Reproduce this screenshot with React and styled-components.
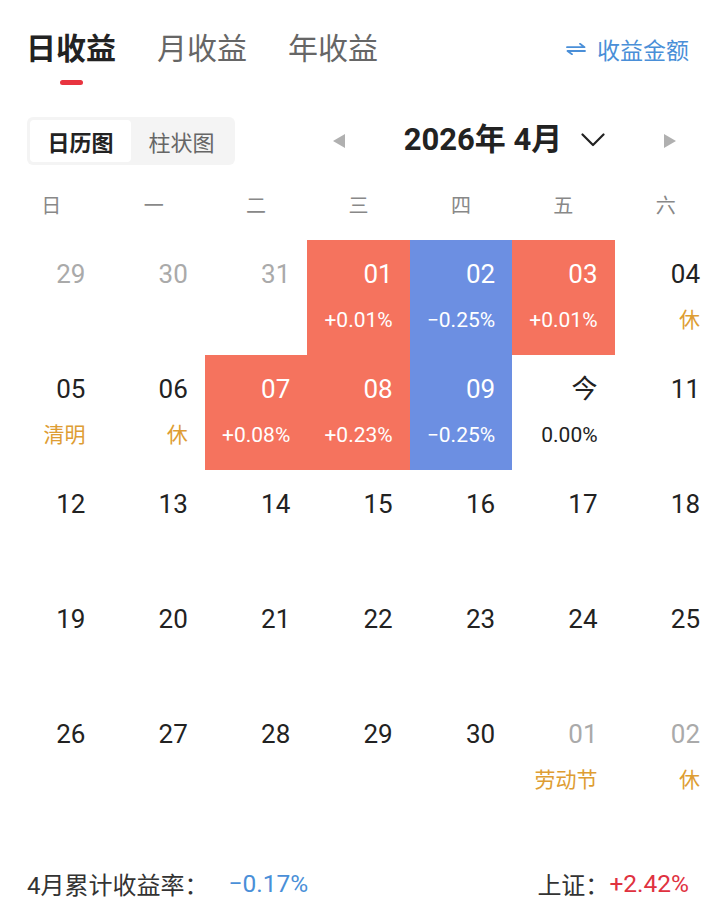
import React from "react";
import styled, { createGlobalStyle } from "styled-components";

const GlobalStyle = createGlobalStyle`
  body {
    margin: 0;
    background: #ffffff;
    font-family: Roboto, "Noto Sans CJK SC", sans-serif;
  }
`;

const Page = styled.div`
  width: 717px;
  background: #ffffff;
`;

const Header = styled.div`
  display: flex;
  align-items: flex-start;
  justify-content: space-between;
  padding: 30px 28px 0 26px;
`;

const Tabs = styled.div`
  display: flex;
  gap: 41px;
`;

const Tab = styled.div`
  display: flex;
  flex-direction: column;
  align-items: center;
  font-size: 30px;
  line-height: 38px;
  font-weight: ${(p) => (p.$active ? 700 : 400)};
  color: ${(p) => (p.$active ? "#222222" : "#666666")};
`;

const Underline = styled.div`
  width: 23px;
  height: 5px;
  border-radius: 3px;
  margin-top: 12px;
  background: ${(p) => (p.$active ? "#E8343F" : "transparent")};
`;

const AmountSwitch = styled.div`
  display: flex;
  align-items: center;
  gap: 11px;
  height: 38px;
  font-size: 23px;
  color: #4a8fd8;
`;

const Toolbar = styled.div`
  display: flex;
  align-items: center;
  margin-top: 32px;
  padding: 0 41px 0 27px;
`;

const Segmented = styled.div`
  display: flex;
  box-sizing: border-box;
  width: 208px;
  height: 48px;
  padding: 3px;
  background: #f4f4f4;
  border-radius: 6px;
`;

const SegButton = styled.div`
  flex: 1;
  display: flex;
  align-items: center;
  justify-content: center;
  border-radius: 4px;
  font-size: 22px;
  background: ${(p) => (p.$active ? "#ffffff" : "transparent")};
  font-weight: ${(p) => (p.$active ? 700 : 400)};
  color: ${(p) => (p.$active ? "#222222" : "#666666")};
`;

const MonthNav = styled.div`
  flex: 1;
  display: flex;
  align-items: center;
  justify-content: space-between;
  margin-left: 98px;
`;

const MonthTitle = styled.div`
  display: flex;
  align-items: center;
  gap: 19px;
  margin-top: -2px;
  font-size: 31px;
  line-height: 40px;
  font-weight: 700;
  color: #222222;
`;

const Weekdays = styled.div`
  display: grid;
  grid-template-columns: repeat(7, 1fr);
  align-items: center;
  height: 34px;
  margin-top: 22px;
  text-align: center;
  font-size: 20px;
  color: #888888;
`;

const Grid = styled.div`
  display: grid;
  grid-template-columns: repeat(7, 1fr);
  grid-auto-rows: 115px;
  margin-top: 19px;
`;

const toneBg = { up: "#F5735E", down: "#6C8FE2" };

const Cell = styled.div`
  display: flex;
  flex-direction: column;
  align-items: flex-end;
  padding: 19px 17px 0 0;
  background: ${(p) => toneBg[p.$tone] || "transparent"};
`;

const DayNum = styled.div`
  font-size: 26px;
  line-height: 30px;
  color: ${(p) => (p.$tone ? "#ffffff" : p.$other ? "#AAAAAA" : "#222222")};
`;

const Sub = styled.div`
  margin-top: 19px;
  font-size: 21px;
  line-height: 24px;
  color: ${(p) => (p.$tone ? "#ffffff" : p.$holiday ? "#DE9D33" : "#222222")};
`;

const Summary = styled.div`
  display: flex;
  align-items: center;
  justify-content: space-between;
  height: 40px;
  margin-top: 48px;
  padding: 0 28px 0 27px;
`;

const SumItem = styled.div`
  display: flex;
  align-items: center;
`;

const SumLabel = styled.span`
  font-size: 24px;
  color: #333333;
`;

const SumValue = styled.span`
  margin-left: ${(p) => p.$gap}px;
  font-size: 24.5px;
  color: ${(p) => (p.$up ? "#E0323F" : "#4A8FD8")};
`;

const SwapIcon = () => (
  <svg width="20" height="12" viewBox="0 0 20 12" fill="none" stroke="#4a8fd8" strokeWidth="1.8" strokeLinecap="round" strokeLinejoin="round">
    <path d="M1 4.2h17.5L14 0.8" />
    <path d="M19 8H1.5L6 11.2" />
  </svg>
);

const Triangle = ({ dir }) => (
  <svg width="12" height="14" viewBox="0 0 12 14">
    <path d={dir === "left" ? "M12 0v14L0 7z" : "M0 0v14l12-7z"} fill="#b0b0b0" />
  </svg>
);

const Chevron = () => (
  <svg width="24" height="14" viewBox="0 0 24 14" fill="none" stroke="#222" strokeWidth="2.2" strokeLinecap="round" strokeLinejoin="round">
    <path d="M1.5 1.5L12 12L22.5 1.5" />
  </svg>
);

const M = "\u2212";

const weeks = [
  [
    { d: "29", other: true },
    { d: "30", other: true },
    { d: "31", other: true },
    { d: "01", v: "+0.01%", tone: "up" },
    { d: "02", v: M + "0.25%", tone: "down" },
    { d: "03", v: "+0.01%", tone: "up" },
    { d: "04", label: "休" },
  ],
  [
    { d: "05", label: "清明" },
    { d: "06", label: "休" },
    { d: "07", v: "+0.08%", tone: "up" },
    { d: "08", v: "+0.23%", tone: "up" },
    { d: "09", v: M + "0.25%", tone: "down" },
    { d: "今", v: "0.00%" },
    { d: "11" },
  ],
  ["12", "13", "14", "15", "16", "17", "18"].map((d) => ({ d })),
  ["19", "20", "21", "22", "23", "24", "25"].map((d) => ({ d })),
  [
    { d: "26" },
    { d: "27" },
    { d: "28" },
    { d: "29" },
    { d: "30" },
    { d: "01", other: true, label: "劳动节" },
    { d: "02", other: true, label: "休" },
  ],
];

const App = () => {
  return (
    <Page>
      <GlobalStyle />
      <Header>
        <Tabs>
          {["日收益", "月收益", "年收益"].map((t, i) => (
            <Tab key={t} $active={i === 0}>
              {t}
              <Underline $active={i === 0} />
            </Tab>
          ))}
        </Tabs>
        <AmountSwitch>
          <SwapIcon />
          收益金额
        </AmountSwitch>
      </Header>

      <Toolbar>
        <Segmented>
          <SegButton $active>日历图</SegButton>
          <SegButton>柱状图</SegButton>
        </Segmented>
        <MonthNav>
          <Triangle dir="left" />
          <MonthTitle>
            2026年 4月
            <Chevron />
          </MonthTitle>
          <Triangle dir="right" />
        </MonthNav>
      </Toolbar>

      <Weekdays>
        {["日", "一", "二", "三", "四", "五", "六"].map((w) => (
          <div key={w}>{w}</div>
        ))}
      </Weekdays>

      <Grid>
        {weeks.flat().map((c, i) => (
          <Cell key={i} $tone={c.tone}>
            <DayNum $tone={c.tone} $other={c.other}>{c.d}</DayNum>
            {c.v && <Sub $tone={c.tone}>{c.v}</Sub>}
            {c.label && <Sub $holiday>{c.label}</Sub>}
          </Cell>
        ))}
      </Grid>

      <Summary>
        <SumItem>
          <SumLabel>4月累计收益率：</SumLabel>
          <SumValue $gap={20}>{M}0.17%</SumValue>
        </SumItem>
        <SumItem>
          <SumLabel>上证：</SumLabel>
          <SumValue $gap={0} $up>+2.42%</SumValue>
        </SumItem>
      </Summary>
    </Page>
  );
};

export default App;
